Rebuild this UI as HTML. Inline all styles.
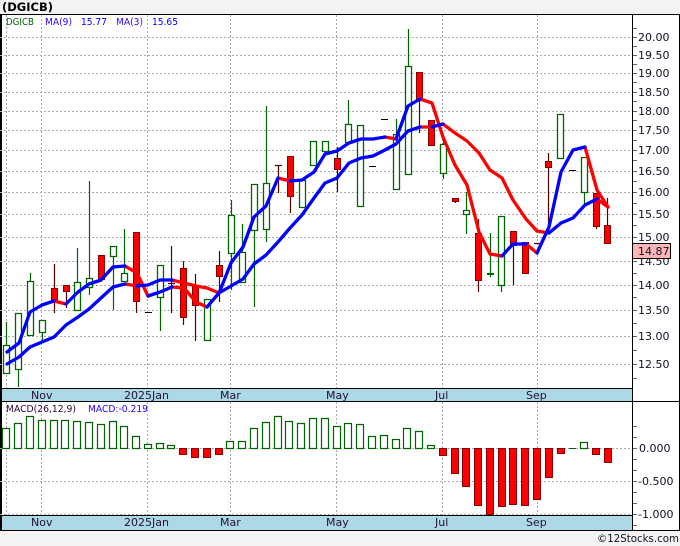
<!DOCTYPE html>
<html><head><meta charset="utf-8"><title>DGICB</title>
<style>
html,body{margin:0;padding:0;background:#f3f3f3;width:680px;height:546px;overflow:hidden}
svg{display:block}
text{font-family:"DejaVu Sans",sans-serif}
</style></head><body>
<svg width="680" height="546" viewBox="0 0 680 546" xmlns="http://www.w3.org/2000/svg">
<rect width="680" height="546" fill="#f3f3f3"/>
<rect x="0" y="14" width="680" height="517" fill="#fff"/>
<rect x="0" y="388" width="632" height="14" fill="#add8e6"/>
<rect x="0" y="515" width="632" height="15" fill="#add8e6"/>
<path d="M1 14V530" stroke="#000" stroke-width="2" fill="none"/>
<path d="M0 14.5H680M0 388.5H632M0 401.5H680M0 515.5H632M0 530.5H680M632.5 14V530M679.5 14V530" stroke="#000" stroke-width="1" fill="none"/>
<path d="M0 37.5H632M0 55.5H632M0 73.5H632M0 92.5H632M0 111.5H632M0 130.5H632M0 150.5H632M0 171.5H632M0 192.5H632M0 214.5H632M0 237.5H632M0 261.5H632M0 285.5H632M0 310.5H632M0 336.5H632M0 364.5H632M0 448.5H632M0 481.5H632M0 514.5H632" stroke="#aaa" stroke-width="1" stroke-dasharray="2 2" fill="none"/>
<path d="M6.5 15V388M41.5 15V388M147.5 15V388M230.5 15V388M336.5 15V388M442.5 15V388M537.5 15V388M6.5 402V515M41.5 402V515M147.5 402V515M230.5 402V515M336.5 402V515M442.5 402V515M537.5 402V515" stroke="#aaa" stroke-width="1" stroke-dasharray="2 2" fill="none"/>
<path d="M633 37.5h4M633 55.5h4M633 73.5h4M633 92.5h4M633 111.5h4M633 130.5h4M633 150.5h4M633 171.5h4M633 192.5h4M633 214.5h4M633 237.5h4M633 261.5h4M633 285.5h4M633 310.5h4M633 336.5h4M633 364.5h4M633 28.5h4M633 46.5h4M633 64.5h4M633 82.5h4M633 101.5h4M633 120.5h4M633 140.5h4M633 160.5h4M633 181.5h4M633 203.5h4M633 225.5h4M633 249.5h4M633 273.5h4M633 297.5h4M633 323.5h4M633 350.5h4M633 378.5h4M633 426.5h4M633 437.5h4M633 448.5h4M633 459.5h4M633 470.5h4M633 481.5h4M633 492.5h4M633 503.5h4M633 514.5h4M633 525.5h4" stroke="#666" stroke-width="1" fill="none"/>

<path fill="none" stroke="#006400" stroke-width="1.2" d="M6.5 322V345M18.5 369V387M30.5 273V281M42.5 332V342M77.5 248V282M89.5 181V278M89.5 287V295M113.5 256V310M124.5 229V273M160.5 297V331M231.5 200V215M231.5 253V290M242.5 224V252M254.5 230V307M266.5 106V183M266.5 229V242M348.5 100V124M396.5 119V134M408.5 29V66M443.5 138V144M443.5 173V179M466.5 192V210M466.5 214V234M490.5 233V277M501.5 285V292M584.5 192V205"/>
<path fill="#fff" stroke="#006400" stroke-width="1.3" d="M3.5 345.5h6v28h-6zM15.5 313.5h6v56h-6zM27.5 281.5h6v54h-6zM39.5 320.5h6v12h-6zM74.5 282.5h6v28h-6zM86.5 278.5h6v9h-6zM110.5 246.5h6v10h-6zM121.5 273.5h6v8h-6zM157.5 265.5h6v32h-6zM204.5 299.5h6v41h-6zM228.5 215.5h6v38h-6zM239.5 252.5h6v30h-6zM251.5 184.5h6v46h-6zM263.5 183.5h6v46h-6zM299.5 180.5h6v27h-6zM310.5 141.5h6v24h-6zM322.5 141.5h6v10h-6zM345.5 124.5h6v18h-6zM357.5 125.5h6v81h-6zM393.5 134.5h6v55h-6zM405.5 66.5h6v108h-6zM440.5 144.5h6v29h-6zM463.5 210.5h6v4h-6zM498.5 216.5h6v69h-6zM557.5 114.5h6v44h-6zM581.5 157.5h6v35h-6z"/>
<path fill="none" stroke="#006400" stroke-width="2" d="M487 274h7"/>
<path fill="none" stroke="#000" stroke-width="1" d="M145 312.5h7M369 166.5h7M381 119.5h7M569 170.5h7"/>
<path fill="none" stroke="#500" stroke-width="1.2" d="M54.5 264V288M54.5 302V313M66.5 291V308M136.5 301V313M171.5 246V313M168 283.5h7M183.5 261V268M183.5 317V325M195.5 274V286M195.5 305V341M219.5 251V265M219.5 276V302M278.5 165V193M275 165.5h7M290.5 196V213M337.5 147V158M337.5 169V192M419.5 100V133M455.5 201V203M478.5 219V233M478.5 280V292M513.5 245V285M534 243.5h7M548.5 153V161M548.5 167V233M596.5 226V229M607.5 198V225"/>
<path fill="#f00" stroke="#800" stroke-width="1" d="M51.5 288.5h6v14h-6zM63.5 285.5h6v6h-6zM98.5 255.5h6v24h-6zM133.5 232.5h6v69h-6zM180.5 268.5h6v49h-6zM192.5 286.5h6v19h-6zM216.5 265.5h6v11h-6zM287.5 156.5h6v40h-6zM334.5 158.5h6v11h-6zM416.5 72.5h6v28h-6zM428.5 120.5h6v25h-6zM452.5 198.5h6v3h-6zM475.5 233.5h6v47h-6zM510.5 231.5h6v14h-6zM522.5 242.5h6v31h-6zM545.5 161.5h6v6h-6zM593.5 193.5h6v33h-6zM604.5 225.5h6v18h-6z"/>

<g fill="none" stroke-width="3.3" stroke-linejoin="round" stroke-linecap="round">
<g stroke="#f00">
<polyline points="125,284 137,286"/>
<polyline points="172,280 184,283 196,286 207,288 219,293"/>
<polyline points="420,127 432,127"/>
<polyline points="443,124 455,133 467,141 479,153 490,170 502,178 513,200 526,219 537,231 549,233"/>
<polyline points="597,199 608,207"/>
<polyline points="54,301 66,304"/>
<polyline points="125,266 137,273 148,296"/>
<polyline points="172,287 184,288 196,302 207,307"/>
<polyline points="278,178 290,181"/>
<polyline points="385,137 396,139"/>
<polyline points="420,99 432,103 443,137 455,165 467,185 479,232 490,254 502,256"/>
<polyline points="526,244 537,253"/>
<polyline points="585,147 597,190 608,207"/>
</g>
<g stroke="#00f">
<polyline points="7,364 19,357 30,347 42,342 54,337 66,325 78,317 89,309 101,298 113,287 125,284"/>
<polyline points="137,286 148,285 160,280 172,280"/>
<polyline points="219,293 231,286 243,279 254,264 266,255 278,242 290,228 302,215 314,198 325,183 337,178 349,163 361,158 373,156 385,150 396,144 408,131 420,127"/>
<polyline points="432,127 443,124"/>
<polyline points="549,233 561,223 573,218 585,205 597,199"/>
<polyline points="7,352 19,343 30,312 42,305 54,301"/>
<polyline points="66,304 78,292 89,284 101,280 113,267 125,266"/>
<polyline points="148,296 160,292 172,287"/>
<polyline points="207,307 219,293 231,263 243,247 254,217 266,206 278,178"/>
<polyline points="290,181 302,180 314,172 325,154 337,151 349,143 361,139 373,139 385,137"/>
<polyline points="396,139 408,106 420,99"/>
<polyline points="502,256 513,244 526,244"/>
<polyline points="537,253 549,227 561,172 573,150 585,147"/>
</g>
</g>

<path fill="#fff" stroke="#006400" stroke-width="1.2" d="M2.5 428.5h7v20h-7zM14.5 423.5h7v25h-7zM26.5 416.5h7v32h-7zM38.5 420.5h7v28h-7zM50.5 420.5h7v28h-7zM61.5 420.5h7v28h-7zM73.5 421.5h7v27h-7zM85.5 422.5h7v26h-7zM97.5 424.5h7v24h-7zM109.5 421.5h7v27h-7zM120.5 426.5h7v22h-7zM132.5 436.5h7v12h-7zM144.5 444.5h7v4h-7zM156.5 443.5h7v5h-7zM167.5 445.5h7v3h-7zM226.5 441.5h7v7h-7zM238.5 441.5h7v7h-7zM250.5 428.5h7v20h-7zM262.5 422.5h7v26h-7zM274.5 416.5h7v32h-7zM285.5 421.5h7v27h-7zM297.5 423.5h7v25h-7zM309.5 418.5h7v30h-7zM321.5 418.5h7v30h-7zM333.5 426.5h7v22h-7zM344.5 423.5h7v25h-7zM356.5 424.5h7v24h-7zM368.5 436.5h7v12h-7zM380.5 435.5h7v13h-7zM392.5 439.5h7v9h-7zM403.5 428.5h7v20h-7zM415.5 431.5h7v17h-7zM427.5 445.5h7v3h-7zM580.5 442.5h7v6h-7z"/>
<path fill="none" stroke="#006400" stroke-width="1" d="M569 448.5h7"/>
<path fill="#f00" stroke="#800" stroke-width="1" d="M179.5 448.5h7v6h-7zM191.5 448.5h7v9h-7zM203.5 448.5h7v9h-7zM215.5 448.5h7v6h-7zM439.5 448.5h7v7h-7zM451.5 448.5h7v25h-7zM462.5 448.5h7v38h-7zM474.5 448.5h7v57h-7zM486.5 448.5h7v66h-7zM498.5 448.5h7v58h-7zM509.5 448.5h7v56h-7zM521.5 448.5h7v57h-7zM533.5 448.5h7v51h-7zM545.5 448.5h7v29h-7zM557.5 448.5h7v5h-7zM592.5 448.5h7v6h-7zM604.5 448.5h7v14h-7z"/>

<rect x="632.5" y="243.5" width="38" height="15" fill="#ffb6b6" stroke="#000" stroke-width="1"/>

<text x="2" y="11" font-size="11.5" font-weight="bold" fill="#000" textLength="51" lengthAdjust="spacingAndGlyphs">(DGICB)</text>
<g font-size="10">
<text x="6" y="25" fill="#006400" textLength="28" lengthAdjust="spacingAndGlyphs">DGICB</text>
<text x="45" y="25" fill="#3300ff" textLength="27" lengthAdjust="spacingAndGlyphs">MA(9)</text>
<text x="81" y="25" fill="#0000ee" textLength="26" lengthAdjust="spacingAndGlyphs">15.77</text>
<text x="116" y="25" fill="#3300ff" textLength="27" lengthAdjust="spacingAndGlyphs">MA(3)</text>
<text x="152" y="25" fill="#0000ee" textLength="26" lengthAdjust="spacingAndGlyphs">15.65</text>
<text x="6" y="412" fill="#330033" textLength="70" lengthAdjust="spacingAndGlyphs">MACD(26,12,9)</text>
<text x="88" y="412" fill="#2200ff" textLength="60" lengthAdjust="spacingAndGlyphs">MACD:-0.219</text>
</g>
<g font-size="11" fill="#112">
<text x="638" y="41">20.00</text><text x="638" y="59">19.50</text><text x="638" y="77">19.00</text><text x="638" y="96">18.50</text><text x="638" y="115">18.00</text><text x="638" y="134">17.50</text><text x="638" y="154">17.00</text><text x="638" y="175">16.50</text><text x="638" y="196">16.00</text><text x="638" y="218">15.50</text><text x="638" y="241">15.00</text><text x="638" y="265">14.50</text><text x="638" y="289">14.00</text><text x="638" y="314">13.50</text><text x="638" y="340">13.00</text><text x="638" y="368">12.50</text>
<rect x="633" y="244" width="37" height="14" fill="#ffb6b6"/>
<text x="638" y="255">14.87</text>
<text x="639" y="452">0.000</text><text x="638" y="485">-0.500</text><text x="638" y="518">-1.000</text>
<g fill="#213">
<text x="31" y="399">Nov</text><text x="124" y="399">2025Jan</text><text x="220" y="399">Mar</text><text x="326" y="399">May</text><text x="435" y="399">Jul</text><text x="526" y="399">Sep</text>
<text x="31" y="526">Nov</text><text x="124" y="526">2025Jan</text><text x="220" y="526">Mar</text><text x="326" y="526">May</text><text x="435" y="526">Jul</text><text x="526" y="526">Sep</text>
</g>
<text x="597" y="542" textLength="82" lengthAdjust="spacingAndGlyphs">©12Stocks.com</text>
</g>
</svg>
</body></html>
